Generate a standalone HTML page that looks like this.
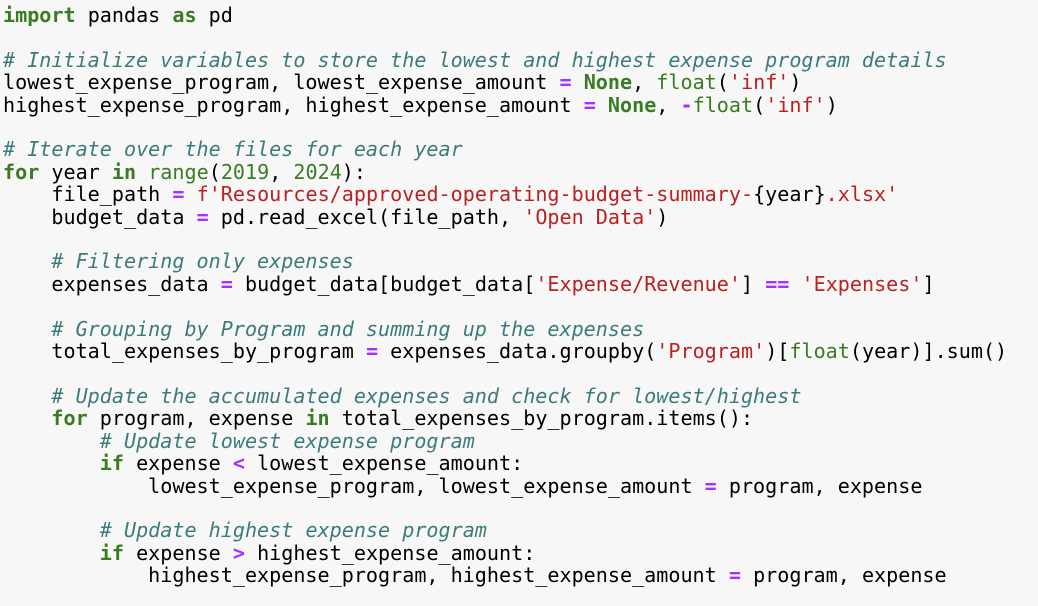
<!DOCTYPE html>
<html><head><meta charset="utf-8"><style>
html,body{margin:0;padding:0;background:#f7f7f7;width:1038px;height:606px;overflow:hidden}
pre{margin:0;position:absolute;left:3px;top:4px;font-family:"DejaVu Sans Mono","Liberation Mono",monospace;font-size:20.1px;line-height:22.4px;color:#000;white-space:pre}
.k{color:#3a7c22;font-weight:bold}
.b{color:#3a7c22}
.n{color:#3a7c22}
.s{color:#ba2121}
.o{color:#a630ff;font-weight:bold}
.c{color:#3d7b7b;font-style:italic}
</style></head><body><pre><span class="k">import</span> pandas <span class="k">as</span> pd

<span class="c"># Initialize variables to store the lowest and highest expense program details</span>
lowest_expense_program, lowest_expense_amount <span class="o">=</span> <span class="k">None</span>, <span class="b">float</span>(<span class="s">'inf'</span>)
highest_expense_program, highest_expense_amount <span class="o">=</span> <span class="k">None</span>, <span class="o">-</span><span class="b">float</span>(<span class="s">'inf'</span>)

<span class="c"># Iterate over the files for each year</span>
<span class="k">for</span> year <span class="k">in</span> <span class="b">range</span>(<span class="n">2019</span>, <span class="n">2024</span>):
    file_path <span class="o">=</span> <span class="s">f'Resources/approved-operating-budget-summary-</span>{year}<span class="s">.xlsx'</span>
    budget_data <span class="o">=</span> pd.read_excel(file_path, <span class="s">'Open Data'</span>)

    <span class="c"># Filtering only expenses</span>
    expenses_data <span class="o">=</span> budget_data[budget_data[<span class="s">'Expense/Revenue'</span>] <span class="o">==</span> <span class="s">'Expenses'</span>]

    <span class="c"># Grouping by Program and summing up the expenses</span>
    total_expenses_by_program <span class="o">=</span> expenses_data.groupby(<span class="s">'Program'</span>)[<span class="b">float</span>(year)].sum()

    <span class="c"># Update the accumulated expenses and check for lowest/highest</span>
    <span class="k">for</span> program, expense <span class="k">in</span> total_expenses_by_program.items():
        <span class="c"># Update lowest expense program</span>
        <span class="k">if</span> expense <span class="o">&lt;</span> lowest_expense_amount:
            lowest_expense_program, lowest_expense_amount <span class="o">=</span> program, expense

        <span class="c"># Update highest expense program</span>
        <span class="k">if</span> expense <span class="o">&gt;</span> highest_expense_amount:
            highest_expense_program, highest_expense_amount <span class="o">=</span> program, expense</pre></body></html>
